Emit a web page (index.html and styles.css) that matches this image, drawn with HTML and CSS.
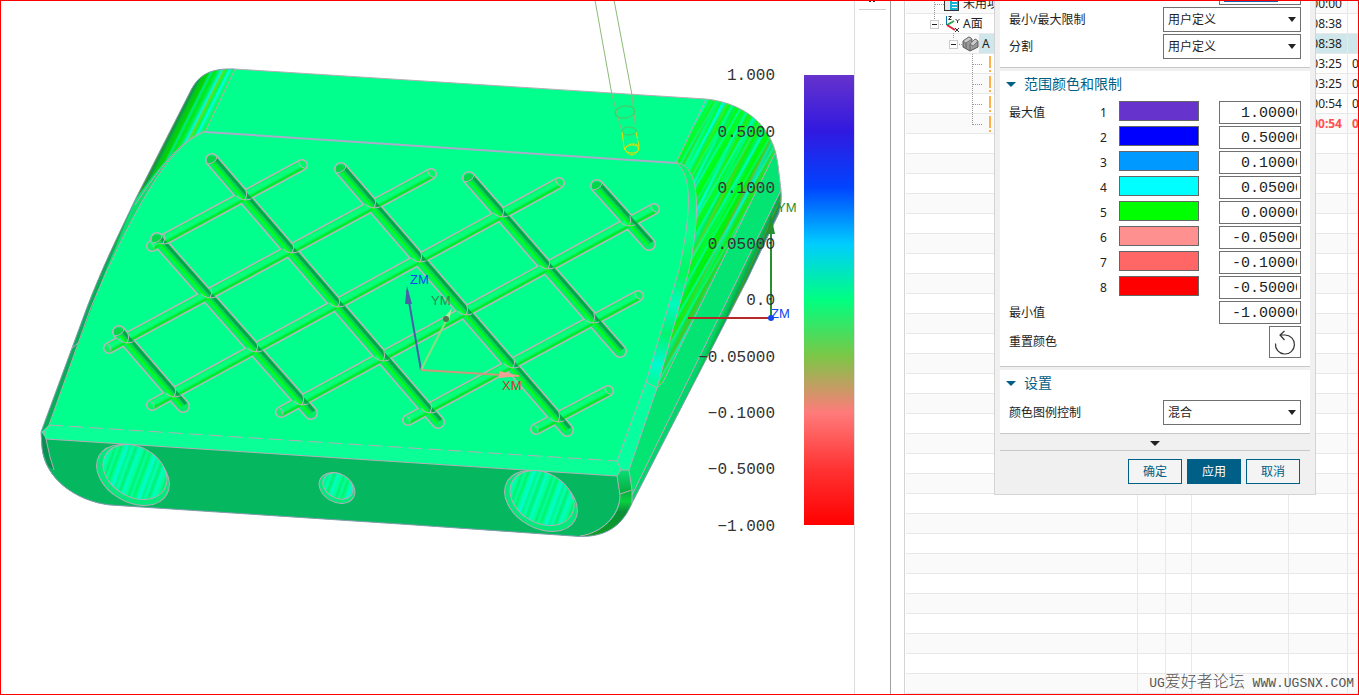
FILE: index.html
```html
<!DOCTYPE html>
<html lang="zh-CN">
<head>
<meta charset="utf-8">
<title>厚度分析</title>
<link rel="stylesheet" href="styles.css">
</head>
<body>
<div class="frame">
  <main class="viewport">
    <svg class="scene" viewBox="1 1 853 693" preserveAspectRatio="xMinYMin meet" role="img" aria-label="模型">
      <defs>
        <linearGradient id="legend" x1="0" y1="0" x2="0" y2="1">
          <stop offset="0" stop-color="#6633cc"/><stop offset=".125" stop-color="#3119e0"/>
          <stop offset=".25" stop-color="#0044ff"/><stop offset=".375" stop-color="#00ccff"/>
          <stop offset=".5" stop-color="#00ff80"/><stop offset=".625" stop-color="#7cc646"/>
          <stop offset=".75" stop-color="#ff7b7b"/><stop offset=".875" stop-color="#ff3333"/>
          <stop offset="1" stop-color="#ff0000"/>
        </linearGradient>
        <linearGradient id="cornerR" gradientUnits="userSpaceOnUse" x1="706" y1="99" x2="783" y2="137">
          <stop offset="0" stop-color="#00ff8c"/><stop offset=".04" stop-color="#00ff20"/>
          <stop offset=".07" stop-color="#00ff8c"/><stop offset=".1" stop-color="#40dc20"/>
          <stop offset=".13" stop-color="#00ffa8"/><stop offset=".17" stop-color="#00ff20"/>
          <stop offset=".19" stop-color="#00ffe0"/><stop offset=".22" stop-color="#00f070"/>
          <stop offset=".25" stop-color="#70d820"/><stop offset=".27" stop-color="#00ff30"/>
          <stop offset=".31" stop-color="#00ffd0"/><stop offset=".33" stop-color="#00f060"/>
          <stop offset=".38" stop-color="#00ff00"/><stop offset=".45" stop-color="#00f830"/>
          <stop offset=".48" stop-color="#00fff0"/><stop offset=".5" stop-color="#00f880"/>
          <stop offset=".53" stop-color="#20f000"/><stop offset=".58" stop-color="#00fa40"/>
          <stop offset=".61" stop-color="#00f0e0"/><stop offset=".64" stop-color="#00f040"/>
          <stop offset=".67" stop-color="#60d020"/><stop offset=".7" stop-color="#00f800"/>
          <stop offset=".76" stop-color="#00f090"/><stop offset=".79" stop-color="#00f010"/>
          <stop offset=".85" stop-color="#00f000"/><stop offset=".88" stop-color="#6cb828"/>
          <stop offset=".91" stop-color="#00e8c0"/><stop offset=".94" stop-color="#20d830"/>
          <stop offset=".97" stop-color="#50c020"/><stop offset="1" stop-color="#00e870"/>
        </linearGradient>
        <linearGradient id="fine" gradientUnits="userSpaceOnUse" x1="706" y1="99" x2="720" y2="107" spreadMethod="repeat">
          <stop offset="0" stop-color="#00ffc0" stop-opacity="0"/><stop offset=".15" stop-color="#00ffe8" stop-opacity=".7"/>
          <stop offset=".25" stop-color="#00ff40" stop-opacity=".4"/><stop offset=".5" stop-color="#00ff00" stop-opacity=".6"/>
          <stop offset=".62" stop-color="#00ffa0" stop-opacity=".7"/><stop offset=".75" stop-color="#00f000" stop-opacity=".3"/>
          <stop offset="1" stop-color="#00ffc0" stop-opacity="0"/>
        </linearGradient>
        <linearGradient id="cornerL" gradientUnits="userSpaceOnUse" x1="235" y1="69" x2="205" y2="54">
          <stop offset="0" stop-color="#00ff50"/><stop offset=".08" stop-color="#00ff90"/>
          <stop offset=".14" stop-color="#00fff0"/><stop offset=".2" stop-color="#00ff40"/>
          <stop offset=".28" stop-color="#60e020"/><stop offset=".34" stop-color="#00f8e8"/>
          <stop offset=".42" stop-color="#00f050"/><stop offset=".52" stop-color="#00e810"/>
          <stop offset=".6" stop-color="#00e890"/><stop offset=".66" stop-color="#00d800"/>
          <stop offset=".78" stop-color="#08c020"/><stop offset=".84" stop-color="#089858"/>
          <stop offset=".89" stop-color="#309818"/><stop offset=".94" stop-color="#089058"/>
          <stop offset="1" stop-color="#188030"/>
        </linearGradient>
        <linearGradient id="edgeR" gradientUnits="userSpaceOnUse" x1="737" y1="280" x2="746" y2="284">
          <stop offset="0" stop-color="#05d46c"/><stop offset=".4" stop-color="#00c040"/>
          <stop offset=".55" stop-color="#0aa070"/><stop offset=".7" stop-color="#4aa010"/>
          <stop offset=".85" stop-color="#0a9060"/><stop offset="1" stop-color="#458080"/>
        </linearGradient>
        <linearGradient id="bore" gradientUnits="userSpaceOnUse" x1="0" y1="0" x2="29" y2="-5" spreadMethod="repeat">
          <stop offset="0" stop-color="#00ff98"/><stop offset=".08" stop-color="#00f070"/>
          <stop offset=".16" stop-color="#00ffa0"/><stop offset=".26" stop-color="#00f468"/>
          <stop offset=".36" stop-color="#00ffa8"/><stop offset=".46" stop-color="#00fcd0"/>
          <stop offset=".54" stop-color="#00f688"/><stop offset=".64" stop-color="#00ffb0"/>
          <stop offset=".74" stop-color="#00f070"/><stop offset=".86" stop-color="#00ffc0"/>
          <stop offset="1" stop-color="#00ff98"/>
        </linearGradient>
        <linearGradient id="bevelR" gradientUnits="userSpaceOnUse" x1="690" y1="180" x2="652" y2="385">
          <stop offset="0" stop-color="#00f870"/><stop offset=".25" stop-color="#0aff90"/>
          <stop offset=".45" stop-color="#00f860"/><stop offset=".6" stop-color="#00fac0"/>
          <stop offset=".75" stop-color="#00f470"/><stop offset=".9" stop-color="#00fad0"/>
          <stop offset="1" stop-color="#00ff90"/>
        </linearGradient>
        <linearGradient id="cornerB" x1="0" y1="0" x2="0" y2="1">
          <stop offset="0" stop-color="#0ade78"/><stop offset=".3" stop-color="#08b040"/>
          <stop offset=".45" stop-color="#0ad040"/><stop offset=".6" stop-color="#0a9038"/>
          <stop offset="1" stop-color="#10a020"/>
        </linearGradient>
        <clipPath id="body"><path d="M235 69L706 99C735 102 757 116 767 133C774 144 776 152 778 165L781 190Q782 205 779 213L747 280L632 503C624 522 610 537 580 536.500L400 524L110 505C75 501 45 478 42 448L41 432L86 310C103 265 120 232 135 200L190 92C198 76 208 68 235 69Z"/></clipPath>
      </defs>

      <g clip-path="url(#body)">
        <rect x="30" y="60" width="760" height="485" fill="#00ff8c"/>
        <path d="M240 60L205 132C180 140 158 170 135 205L86 310L30 450V60Z" fill="url(#cornerL)"/>
        <path d="M205 132C175 142 150 185 123 237C110 264 98 290 90 310L49 425L41 432L86 310L135 200C160 165 180 140 205 132Z" fill="#08e070"/>
        <path d="M135 200L86 310L41 432L49 425L80 339L105 272Z" fill="#08ad58"/>
        <path d="M710 90L676 163C697 172 702 230 657 388L632 480L800 210V90Z" fill="url(#cornerR)"/>
        <path d="M710 90L676 163C697 172 702 230 657 388L632 480L800 210V90Z" fill="url(#fine)"/>
        <path d="M775 153L712 280L663 382L657 388L629 470L632 495L737 280L800 150Z" fill="#04e472"/>
        <path d="M781 190L737 280L632 495V510L800 210Z" fill="url(#edgeR)"/>
        <path d="M676 163C692 173 692 210 679 270L646 382L657 388L689 270C701 212 698 166 680 163Z" fill="url(#bevelR)"/>
        <path d="M646 382L657 388L629 470H621L617 461Z" fill="#08ffa0"/>
        <path d="M49 425L617 461L621 470L617 476L46 439L43 432Z" fill="#0aff96"/>
        <path d="M46 439L617 476L620 495C620 515 602 533 580 536V545H30L41 432Z" fill="#05b860"/>
        <path d="M617 476L621 470H629L632 490V540H570L580 536C605 533 622 512 620 495Z" fill="url(#cornerB)"/>
        <path d="M41 432L46 439L54 470C66 494 83 502 110 505L75 510L40 470Z" fill="#05b860"/>
        <path d="M41 432L46 439L50 457L54 470L48 466L42 448Z" fill="#079050"/>
      </g>

      <g class="edge">
        <path d="M235 69L706 99C735 102 757 116 767 133C774 144 776 152 778 165L781 190Q782 205 779 213"/>
        <path class="rim" d="M779 213L747 280L632 503C624 522 610 537 580 536.500L400 524L110 505C75 501 45 478 42 448L41 432L86 310C103 265 120 232 135 200L190 92C198 76 208 68 235 69"/>
        <path d="M235 69L205 132"/>
        <path class="crease" d="M205 132L676 163"/>
        <path d="M205 132C175 142 150 185 123 237C110 264 98 290 90 310L49 425"/>
        <path stroke-dasharray="14 6" d="M49 425L617 461"/>
        <path d="M617 461L646 382L679 270C692 210 692 173 676 163"/>
        <path d="M205 131C180 140 158 170 135 205M676 163C700 164 701 212 689 270L657 388L629 470H621L617 461M646 382L657 388M621 470L617 476L46 439L44 432L49 425M41 432H44M46 439L50 457L54 470"/>
        <path d="M617 476L620 495C620 515 602 533 580 536M629 470L632 490V503M620 494L632 490M706 99L676 163M775 153L663 382L657 388M781 190L632 495M71 349L78 343"/>
      </g>

      <g id="grooves"></g>

      <g class="edge">
        <g transform="translate(133 475) rotate(30)"><ellipse rx="39" ry="27" fill="#05e87c"/></g>
        <g transform="translate(135 472) rotate(30)"><ellipse rx="34" ry="25" fill="url(#bore)"/></g>
        <g transform="translate(541 501) rotate(30)"><ellipse rx="39" ry="27" fill="#05e87c"/></g>
        <g transform="translate(542 498) rotate(30)"><ellipse rx="34" ry="25" fill="url(#bore)"/></g>
        <g transform="translate(337 488) rotate(30)"><ellipse rx="19" ry="14" fill="#05e87c"/></g>
        <g transform="translate(338 486) rotate(30)"><ellipse rx="16" ry="12" fill="url(#bore)"/></g>
      </g>

      <g fill="none" stroke="#8cba78">
        <path d="M595 0L612 95L622 132M614 0L632 95L636 132"/>
        <ellipse cx="625" cy="112" rx="10" ry="6" transform="rotate(-8 625 112)" stroke="#58c060"/>
        <ellipse cx="629" cy="131" rx="7" ry="4" stroke="#58c060"/>
        <path d="M622 132L624 147Q627 155 632 155Q638 154 639 146L636 132M624 150Q630 140 639 146" stroke="#f0d800"/>
        <ellipse cx="632" cy="149" rx="7" ry="4" stroke="#f0d800"/>
      </g>

      <g stroke-width="2">
        <path d="M421 370L407 290" stroke="#4a5fa8"/>
        <path d="M405 304L412 304L407 286Z" fill="#4a5fa8"/>
        <path d="M421 370L450 313" stroke="#8ddc80"/>
        <path d="M444 318L449 320L452 308Z" fill="#a8f0a0"/>
        <circle cx="446" cy="319" r="3" fill="#4c7850"/>
        <path d="M421 370L519 376" stroke="#d0967c"/>
        <path d="M499 371V378L520 376Z" fill="#f0a090"/>
        <path d="M688 318H771" stroke="#b82828"/>
        <path d="M771 318V230" stroke="#289030"/>
        <path d="M767 234H775L771 215Z" fill="#289030"/>
        <circle cx="771" cy="318" r="3" fill="#1048f0"/>
      </g>
      <g class="axis">
        <text class="axis-z" x="410" y="284">ZM</text>
        <text class="axis-dim" x="431" y="305">YM</text>
        <text class="axis-x" x="502" y="390">XM</text>
        <text class="axis-y" x="777" y="212">YM</text>
        <text class="axis-z" x="771" y="318">ZM</text>
      </g>

      <rect x="804" y="75" width="50" height="450" fill="url(#legend)"/>
      <g class="scale">
        <text x="775" y="80">1.000</text>
        <text x="775" y="137">0.5000</text>
        <text x="775" y="193">0.1000</text>
        <text x="775" y="249">0.05000</text>
        <text x="775" y="305">0.0</text>
        <text x="775" y="362">−0.05000</text>
        <text x="775" y="418">−0.1000</text>
        <text x="775" y="474">−0.5000</text>
        <text x="775" y="531">−1.000</text>
      </g>
    </svg>
  </main>

  <aside class="strip">
    <svg class="strip-mark" width="6" height="2" aria-hidden="true"><path d="M0 0H2V1H0ZM4 0H6V1H4Z" fill="#333"/></svg>
  </aside>

  <section class="navigator">
    <table class="ops">
      <colgroup><col class="c-name"><col class="c-a"><col class="c-b"><col class="c-c"><col class="c-time"><col></colgroup>
      <tbody id="rows">
        <tr><td class="lv1">未用项</td><td></td><td></td><td></td><td class="time">00:00</td><td></td></tr>
        <tr><td class="lv1">A面</td><td></td><td></td><td></td><td class="time">08:38</td><td></td></tr>
        <tr class="current"><td class="lv2"><span>A</span></td><td></td><td></td><td></td><td class="time">08:38</td><td></td></tr>
        <tr><td></td><td></td><td></td><td></td><td class="time">03:25</td><td>0</td></tr>
        <tr><td></td><td></td><td></td><td></td><td class="time">03:25</td><td>0</td></tr>
        <tr><td></td><td></td><td></td><td></td><td class="time">00:54</td><td>0</td></tr>
        <tr class="alert"><td></td><td></td><td></td><td></td><td class="time">00:54</td><td>0</td></tr>
      </tbody>
    </table>
    <svg class="tree" width="88" height="134" viewBox="906 0 88 134" aria-hidden="true">
      <g fill="none" stroke="#999" stroke-dasharray="1 1">
        <path d="M934.500 0V19M935 4.500H944M940 24.500H944M953.500 33V39M959 44.500H963M972.500 54V125M973 64.500H982M973 84.500H982M973 104.500H982M973 124.500H982"/>
      </g>
      <g fill="#fff" stroke="#ccc"><rect x="930.500" y="20.500" width="8" height="8"/><rect x="949.500" y="40.500" width="8" height="8"/></g>
      <path d="M932 24.500H937M951 44.500H956" stroke="#222"/>
      <rect x="944.500" y="-3.500" width="14" height="14" fill="#e8e8e8" stroke="#333"/>
      <rect x="950" y="-3" width="8" height="13" fill="#19b5d8"/>
      <path d="M952 1.500H957M952 4.500H957M952 7.500H957" stroke="#fff"/>
      <path d="M946.500 16V25" stroke="#0877a8"/>
      <path d="M947 25L954 21" stroke="#22a844" stroke-width="2"/>
      <path d="M947 25L955 30" stroke="#e02038" stroke-width="2"/>
      <path d="M948.500 16.500H951.500L948.500 19.500H951.500M955.500 19L957.500 21L959.500 19M957.500 21V23M955 28L959 32M959 28L955 32" fill="none" stroke="#333"/>
      <path d="M963 41L969 37L972 39V42L975 39L978 41V47L970 51L963 47Z" fill="#999" stroke="#555"/>
      <path d="M963 41L969 37L972 39L966 43ZM970 44L975 39L978 41L973 46Z" fill="#ccc" stroke="#777"/>
      <path d="M966 43V48M970 44V50" stroke="#666"/>
      <path d="M990 56V68M990 70V72M990 76V88M990 90V92M990 96V108M990 110V112M990 116V128M990 130V132" stroke="#ffb04a" stroke-width="2"/>
    </svg>
  </section>

  <form class="dialog">
    <div class="panel panel-first">
      <div class="cut"><span class="cut-text"></span></div>
      <div class="row">
        <label for="limit">最小/最大限制</label>
        <span class="pick"><select id="limit"><option>用户定义</option></select><svg width="8" height="5" aria-hidden="true"><path d="M0 0H8L4 5Z"/></svg></span>
      </div>
      <div class="row">
        <label for="split">分割</label>
        <span class="pick"><select id="split"><option>用户定义</option></select><svg width="8" height="5" aria-hidden="true"><path d="M0 0H8L4 5Z"/></svg></span>
      </div>
    </div>

    <div class="panel">
      <h2><svg width="10" height="5" aria-hidden="true"><path d="M0 0H10L5 5Z"/></svg>范围颜色和限制</h2>
      <div class="levels">
        <div class="level"><span>最大值</span><label for="v1">1</label><button type="button" class="swatch s1" aria-label="颜色 1"></button><span class="box"><span class="clip"><input id="v1" value="1.00000"></span></span></div>
        <div class="level"><span></span><label for="v2">2</label><button type="button" class="swatch s2" aria-label="颜色 2"></button><span class="box"><span class="clip"><input id="v2" value="0.50000"></span></span></div>
        <div class="level"><span></span><label for="v3">3</label><button type="button" class="swatch s3" aria-label="颜色 3"></button><span class="box"><span class="clip"><input id="v3" value="0.10000"></span></span></div>
        <div class="level"><span></span><label for="v4">4</label><button type="button" class="swatch s4" aria-label="颜色 4"></button><span class="box"><span class="clip"><input id="v4" value="0.05000"></span></span></div>
        <div class="level"><span></span><label for="v5">5</label><button type="button" class="swatch s5" aria-label="颜色 5"></button><span class="box"><span class="clip"><input id="v5" value="0.00000"></span></span></div>
        <div class="level"><span></span><label for="v6">6</label><button type="button" class="swatch s6" aria-label="颜色 6"></button><span class="box"><span class="clip"><input id="v6" value="-0.05000"></span></span></div>
        <div class="level"><span></span><label for="v7">7</label><button type="button" class="swatch s7" aria-label="颜色 7"></button><span class="box"><span class="clip"><input id="v7" value="-0.10000"></span></span></div>
        <div class="level"><span></span><label for="v8">8</label><button type="button" class="swatch s8" aria-label="颜色 8"></button><span class="box"><span class="clip"><input id="v8" value="-0.50000"></span></span></div>
        <div class="level"><label for="v9">最小值</label><span></span><span></span><span class="box"><span class="clip"><input id="v9" value="-1.00000"></span></span></div>
      </div>
      <div class="row">
        <label for="reset">重置颜色</label>
        <button type="button" id="reset" class="reset"><svg width="24" height="26" viewBox="0 0 24 26" fill="none" stroke="#333" stroke-width="1.200" aria-hidden="true"><path d="M2.500 14.500A9.500 9.500 0 1 0 12 6H7.500M11.500 2L7 6L11.500 11"/></svg></button>
      </div>
    </div>

    <div class="panel">
      <h2><svg width="10" height="5" aria-hidden="true"><path d="M0 0H10L5 5Z"/></svg>设置</h2>
      <div class="row">
        <label for="mode">颜色图例控制</label>
        <span class="pick"><select id="mode"><option>混合</option></select><svg width="8" height="5" aria-hidden="true"><path d="M0 0H8L4 5Z"/></svg></span>
      </div>
    </div>

    <div class="more"><svg width="10" height="5" aria-hidden="true"><path d="M0 0H10L5 5Z"/></svg></div>
    <div class="actions">
      <button type="button">确定</button>
      <button type="button" class="primary">应用</button>
      <button type="button">取消</button>
    </div>
  </form>

  <div class="watermark">UG<span>爱好者论坛</span> WWW.UGSNX.COM</div>
</div>
<script src="app.js"></script>
</body>
</html>
```
FILE: styles.css
```css
* { box-sizing: border-box; }

body {
  margin: 0;
  font: 12px/20px "Noto Sans", "Noto Sans CJK SC", sans-serif;
  color: #222;
  background: #fff;
}

button, input, select { font: inherit; color: inherit; margin: 0; border-radius: 0; }

.frame {
  position: relative;
  display: flex;
  height: 100vh;
  border: 1px solid #f00;
  overflow: hidden;
}

.viewport { flex: 1; min-width: 0; border-right: 1px solid #ddd; }
.scene { display: block; width: 100%; height: 100%; }

.edge { fill: none; stroke: #b8acb8; stroke-width: 1; }
.edge .rim { stroke: #8a9ab0; }
.edge .crease { stroke: #a8acc8; stroke-width: 2; }
.axis { font: 13px "Liberation Sans", sans-serif; }
.axis-z { fill: #1048f0; }
.axis-x { fill: #d03828; }
.axis-y { fill: #289030; }
.axis-dim { fill: #30884c; }
.scale { font: 16px "Liberation Mono", monospace; fill: #333; text-anchor: end; }

.strip { width: 36px; border-right: 1px solid #a0a0a0; padding: 0 4px; }
.strip-mark { display: block; height: 8px; margin-left: 10px; }
.strip::after { content: ""; display: block; border-top: 1px solid #d0d0d0; }

.navigator { position: relative; width: 454px; margin-left: 13px; border-left: 1px solid #d4d4d4; padding-left: 1px; overflow: hidden; }
.ops { width: 100%; margin-top: -7px; table-layout: fixed; border-collapse: separate; border-spacing: 0; }
.ops td { height: 20px; padding: 0; border-bottom: 1px solid #e8e8e8; border-right: 1px solid #e8e8e8; line-height: 19px; white-space: nowrap; overflow: hidden; }
.ops td:last-child { border-right: 0; padding-left: 4px; }
.ops tr:nth-child(odd) td { background: #fafafa; }
.c-name { width: 232px; }
.c-a { width: 28px; }
.c-b { width: 26px; }
.c-c { width: 97px; }
.c-time { width: 59px; }
.ops .lv1 { padding-left: 57px; }
.ops .lv2 { padding-left: 73px; }
.lv2 span { display: block; padding-left: 3px; background: #cfe6ea; }
.ops .time { text-align: right; padding-right: 5px; }
.ops .current td:not(.lv2) { background: #cfe6ea; }
.alert { color: #ff5050; font-weight: bold; }
.tree { position: absolute; left: 1px; top: -1px; }

.dialog {
  position: absolute;
  top: 0;
  right: 42px;
  width: 322px;
  padding: 0 5px 10px;
  background: #f0f0f0;
  border: 1px solid #d4d4d4;
  border-top: 0;
}
.panel { background: #fff; border-bottom: 1px solid #c8c8c8; margin-bottom: 3px; padding: 3px 9px 8px; }
.panel-first { padding-top: 0; }
.cut { width: 82px; height: 4px; margin: 0 0 2px auto; border: 1px solid #707070; border-top: 0; padding-left: 4px; }
.cut-text { display: block; width: 54px; height: 1px; background: #1860b0; }
.row { display: flex; justify-content: space-between; align-items: center; margin-bottom: 2px; }
.row:last-child { margin-bottom: 0; }
.pick { position: relative; width: 138px; }
.pick select { display: block; width: 100%; height: 25px; padding: 0 4px; border: 1px solid #707070; background: #fff; appearance: none; }
.pick svg { position: absolute; right: 5px; top: 10px; fill: #222; pointer-events: none; }

h2 { display: flex; align-items: center; gap: 8px; margin: 0 0 7px -3px; font-size: 14px; line-height: 20px; font-weight: normal; color: #005f87; }
h2 svg { fill: #005f87; }

.levels { display: grid; gap: 2px; margin-bottom: 2px; }
.level { display: grid; grid-template-columns: 91px 19px 80px 1fr; align-items: center; }
.level > .box { justify-self: end; }
.swatch { align-self: start; width: 80px; height: 20px; padding: 0; border: 1px solid #666; }
.s1 { background: #6633cc; }
.s2 { background: #0000ff; }
.s3 { background: #0099ff; }
.s4 { background: #00ffff; }
.s5 { background: #00ff00; }
.s6 { background: #ff9090; }
.s7 { background: #ff6666; }
.s8 { background: #ff0000; }
.box { width: 82px; height: 23px; border: 1px solid #707070; padding-right: 3px; background: #fff; }
.clip { display: block; overflow: hidden; height: 21px; }
.clip input { display: block; width: 84px; height: 23px; padding: 0; border: 0; background: none; font: 15px/23px "Liberation Mono", monospace; text-align: right; }
.reset { display: grid; place-items: center; width: 32px; height: 32px; padding: 0; border: 1px solid #707070; background: #fff; }

.more { display: flex; justify-content: center; align-items: center; height: 14px; border-bottom: 1px solid #c8c8c8; fill: #222; }
.actions { display: flex; justify-content: flex-end; gap: 5px; padding: 8px 10px 0 0; }
.actions button { width: 54px; height: 25px; padding: 0; border: 1px solid #005f87; background: #f4f4f4; color: #005f87; }
.actions .primary { background: #005f87; color: #fff; }

.watermark { position: absolute; right: 4px; bottom: 0; font: 13px/20px "Liberation Mono", "Noto Sans CJK SC", monospace; color: #555; white-space: pre; }
.watermark span { font-size: 16px; font-weight: 300; }
```
FILE: app.js
```js
const NS = "http://www.w3.org/2000/svg";
const grooves = document.getElementById("grooves");

// End points of the grooves milled into the top face.
const steep = [
  [212, 160, 438, 422], [341, 169, 567, 430], [469, 178, 620, 351],
  [597, 186, 649, 244], [157, 239, 311, 413], [119, 332, 183, 406]
];
const shallow = [
  [152, 246, 302, 165], [109, 348, 431, 174], [152, 405, 559, 183],
  [281, 412, 654, 209], [408, 420, 638, 296], [536, 429, 608, 391]
];
const nodes = [
  [245, 200], [292, 253], [338, 307], [210, 298], [163, 244], [374, 208],
  [420, 262], [502, 217], [548, 269], [629, 226], [127, 343], [174, 397],
  [256, 352], [302, 405], [383, 361], [466, 315], [513, 368], [593, 323],
  [558, 422], [430, 413]
];

function add(d, color, width, cap) {
  const p = document.createElementNS(NS, "path");
  p.setAttribute("d", d);
  p.setAttribute("fill", "none");
  p.setAttribute("stroke", color);
  p.setAttribute("stroke-width", width);
  p.setAttribute("stroke-linecap", cap);
  grooves.appendChild(p);
}

// Draws each line moved sideways, as one band of the groove's shading.
function band(lines, color, width, dx, dy, cap = "butt") {
  lines.forEach(([a, b, c, d]) => add(`M${a + dx} ${b + dy}L${c + dx} ${d + dy}`, color, width, cap));
}

const outline = "#c0b0bc";
band(steep, outline, 14, 0, 0, "round");
band(shallow, outline, 12, 0, 0, "round");
band(steep, "#00ee68", 11, 0, 0, "round");
band(shallow, "#00f868", 9, 0, 0, "round");
band(shallow, "#08ff7c", 4, -1, -1);
band(shallow, "#00e828", 2, 1, 3);
band(steep, "#00d858", 4, 1, -1);
band(steep, "#04a448", 3, 3, -2);
band(steep, "#00ff10", 2, -1, 1);
nodes.forEach(([x, y]) => add(`M${x - 9} ${y - 4}Q${x - 3} ${y + 2} ${x + 6} ${y - 1}M${x} ${y}Q${x + 3} ${y - 5} ${x + 1} ${y - 10}`, outline, 1, "round"));

// Rounded ends: the cutter's plunge mark at the start of each groove.
steep.forEach(([x, y]) => {
  add(`M${x - 1} ${y}h1`, "#00d84c", 8, "round");
  add(`M${x - 4} ${y + 4}Q${x + 4} ${y + 3} ${x + 5} ${y - 3}`, outline, 1, "round");
});
shallow.forEach(([a, b, x, y]) => {
  add(`M${x - 3} ${y - 3}Q${x - 3} ${y + 2} ${x + 2} ${y + 3}`, outline, 1, "round");
  add(`M${a - 1} ${b - 4}Q${a + 3} ${b - 1} ${a + 2} ${b + 3}`, outline, 1, "round");
});

const rows = document.getElementById("rows");
for (let i = rows.rows.length; i < 36; i++) {
  const tr = rows.insertRow();
  for (let c = 0; c < 6; c++) tr.insertCell();
}
```
